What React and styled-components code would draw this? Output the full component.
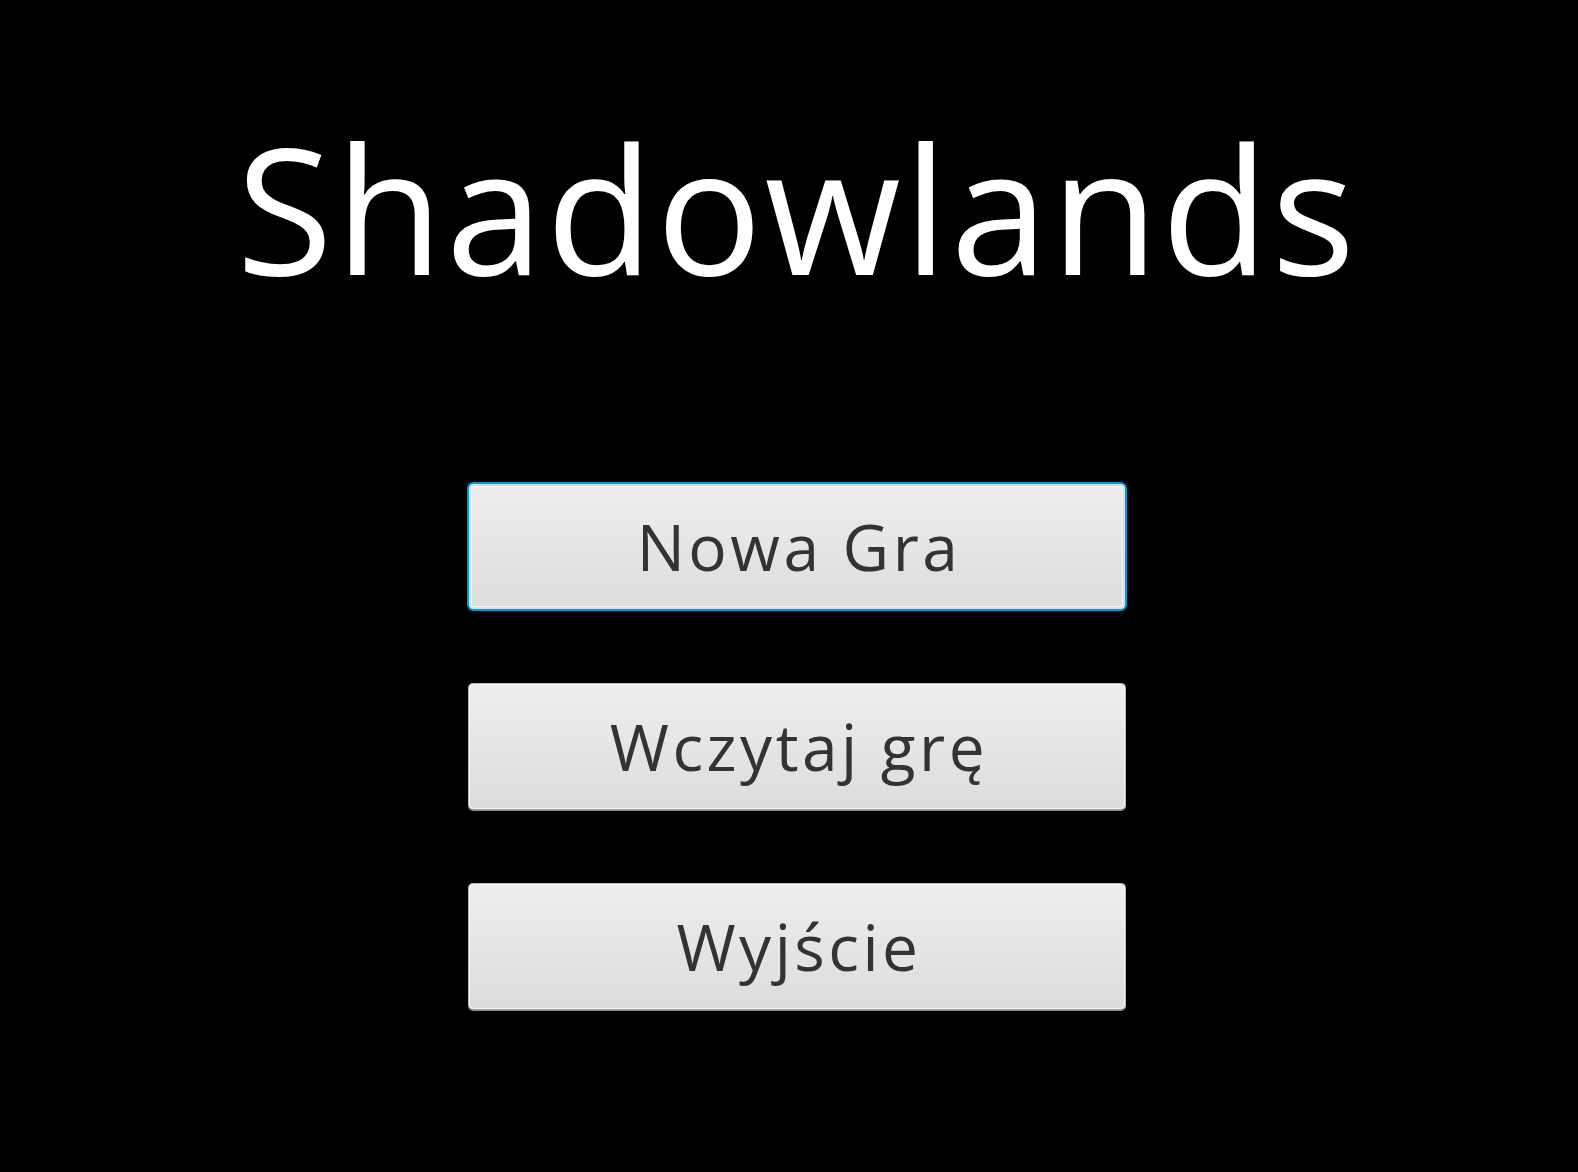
import React from 'react'
import styled, { createGlobalStyle } from 'styled-components'

const GlobalStyle = createGlobalStyle`
  html, body {
    margin: 0;
    padding: 0;
    background: #000;
  }
  body {
    font-family: "Open Sans", "DejaVu Sans", sans-serif;
  }
`

const Screen = styled.div`
  width: 100%;
  min-height: 100vh;
  background: #000;
  display: flex;
  flex-direction: column;
  align-items: center;
  padding: 87px 0 0 16px;
  box-sizing: border-box;
`

const Title = styled.h1`
  margin: 0;
  color: #fff;
  font-family: "Open Sans", sans-serif;
  font-weight: 400;
  font-size: 176px;
  line-height: 240px;
  letter-spacing: 2.5px;
`

const Menu = styled.div`
  display: flex;
  flex-direction: column;
  gap: 73px;
  margin-top: 156px;
`

const MenuButton = styled.button`
  width: 658px;
  height: 127px;
  box-sizing: border-box;
  border-radius: 5px;
  border: 1px solid ${p => (p.$focused ? '#039ed3' : '#b8b8b8')};
  border-bottom-color: ${p => (p.$focused ? '#039ed3' : '#9d9d9d')};
  background: linear-gradient(#eeeeee, #dcdcdc);
  box-shadow: ${p =>
    p.$focused
      ? '0 0 0 1px #039ed3, inset 0 0 0 2px #bfe6f4, inset 0 0 0 3px #f4f4f4'
      : 'inset 0 0 0 1px #f4f4f4, 0 1px 0 #8a8a8a'};
  color: #333;
  font-family: "Open Sans", sans-serif;
  font-size: 64px;
  letter-spacing: 3.5px;
  line-height: 1;
  padding: 0 0 0 4px;
  cursor: pointer;
  outline: none;
`

export default function App() {
  return (
    <Screen>
      <GlobalStyle />
      <Title>Shadowlands</Title>
      <Menu>
        <MenuButton $focused>Nowa Gra</MenuButton>
        <MenuButton>Wczytaj grę</MenuButton>
        <MenuButton>Wyjście</MenuButton>
      </Menu>
    </Screen>
  )
}
